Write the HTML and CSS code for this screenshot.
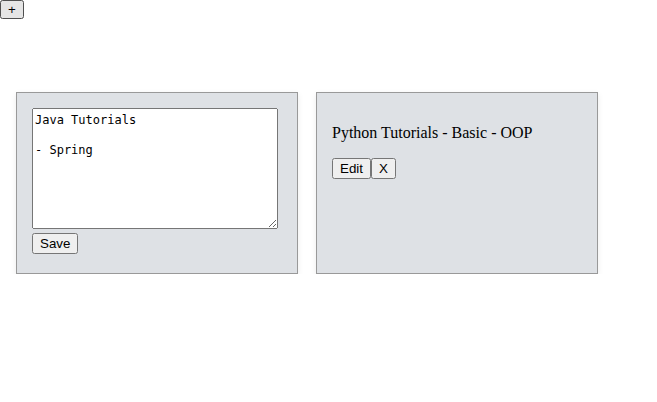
FILE: index.html
```html
<!DOCTYPE html>
<html>
<head>
<meta charset="utf-8">
<link rel="stylesheet" href="styles.css">
</head>
<body>
<button class="btn add-btn">+</button>
<div class="notes">
  <div class="note">
    <textarea class="note-edit">Java Tutorials

- Spring</textarea>
    <div class="actions">
      <button class="btn">Save</button>
    </div>
  </div>
  <div class="note">
    <p class="note-text">Python Tutorials - Basic - OOP</p>
    <div class="actions">
      <button class="btn">Edit</button><button class="btn">X</button>
    </div>
  </div>
</div>
</body>
</html>
```
FILE: styles.css
```css
html, body {
  margin: 0;
  padding: 0;
  background: #ffffff;
}
body {
  font-family: "Liberation Serif", "Times New Roman", serif;
  font-size: 16px;
  color: #000;
}
.btn {
  font-family: "Liberation Sans", Arial, sans-serif;
  font-size: 13.333px;
  margin: 0;
}
.add-btn {
  display: block;
  padding: 0 6px;
  height: 19px;
}
.notes {
  display: flex;
  gap: 18px;
  padding: 73px 0 0 16px;
}
.note {
  box-sizing: border-box;
  width: 282px;
  height: 182px;
  padding: 15px;
  background: #dee1e5;
  border: 1px solid #999999;
  box-shadow: 0 2px 6px rgba(0, 0, 0, 0.08);
}
.note-edit {
  display: block;
  box-sizing: border-box;
  width: 246px;
  height: 121px;
  margin: 0;
  padding: 4px 2px 2px;
  font-family: "DejaVu Sans Mono", monospace;
  font-size: 12px;
  line-height: 15px;
}
.actions {
  display: flex;
  margin-top: 4px;
}
.note-text {
  margin: 16px 0;
}
.note-text + .actions {
  margin-top: 0;
}
```
